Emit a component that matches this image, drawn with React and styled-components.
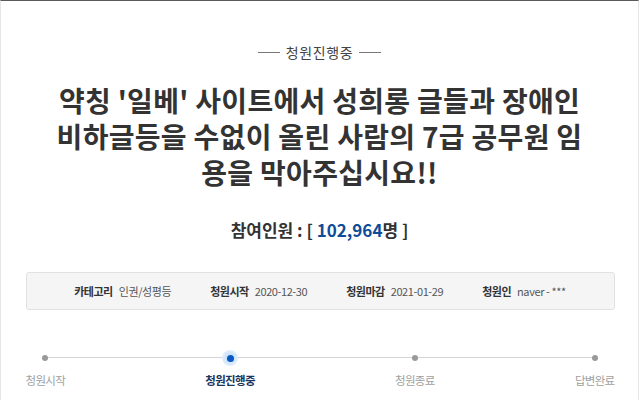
import React from "react";
import styled, { createGlobalStyle } from "styled-components";

const Global = createGlobalStyle`
  html, body { margin: 0; padding: 0; background: #fff; }
  body { font-family: "Noto Sans CJK KR", "Noto Sans", sans-serif; color: #333; }
`;

const Page = styled.div`
  width: 637px;
  height: 399px;
  border-top: 1px solid #5a5a5a;
  border-left: 1px solid #e6e6e6;
  border-right: 1px solid #e6e6e6;
  box-sizing: content-box;
  display: flex;
  flex-direction: column;
  align-items: center;
  overflow: hidden;
`;

const Status = styled.div`
  margin-top: 41px;
  display: flex;
  align-items: center;
  gap: 6px;
  font-size: 14px;
  line-height: 20px;
  letter-spacing: 0.6px;
  color: #444;
  &::before, &::after {
    content: "";
    width: 22px;
    height: 1px;
    background: #777;
  }
`;

const Title = styled.h1`
  margin: 20px 0 0;
  display: flex;
  flex-direction: column;
  align-items: center;
  font-size: 28px;
  font-weight: 700;
  color: #333;
  letter-spacing: 0.3px;
  white-space: nowrap;
`;

const TitleLine = styled.span`
  display: block;
  height: 36px;
  line-height: 36px;
`;

const Count = styled.div`
  margin-top: 28px;
  font-size: 17px;
  font-weight: 700;
  line-height: 24px;
  color: #333;
`;

const Num = styled.span`
  color: #0f4c98;
`;

const InfoBox = styled.div`
  margin-top: 30px;
  width: 587px;
  height: 36px;
  background: #f5f5f5;
  border: 1px solid #e1e1e1;
  border-radius: 3px;
  display: flex;
  align-items: center;
  justify-content: center;
  gap: 39px;
  margin-left: 1px;
`;

const InfoItem = styled.div`
  display: flex;
  align-items: center;
  gap: 6px;
  font-size: 11px;
  line-height: 18px;
`;

const Label = styled.span`
  font-weight: 700;
  color: #333;
  letter-spacing: -0.5px;
`;

const Value = styled.span`
  color: #555;
  letter-spacing: -0.4px;
`;

const Track = styled.div`
  position: relative;
  margin-top: 40px;
  width: 589px;
  display: flex;
  justify-content: space-between;
  margin-left: 1px;
  &::before {
    content: "";
    position: absolute;
    left: 19px;
    right: 20px;
    top: 7px;
    height: 1px;
    background: #d4d4d4;
  }
`;

const Step = styled.div`
  position: relative;
  display: flex;
  flex-direction: column;
  align-items: center;
  gap: 5px;
`;

const DotWrap = styled.div`
  width: 16px;
  height: 16px;
  display: flex;
  align-items: center;
  justify-content: center;
  border-radius: 50%;
  background: ${(p) => (p.$active ? "radial-gradient(circle, #bcd8f7 0%, #dcebfb 60%, rgba(230,241,252,0.4) 100%)" : "transparent")};
`;

const Dot = styled.span`
  width: ${(p) => (p.$active ? 7 : 6)}px;
  height: ${(p) => (p.$active ? 7 : 6)}px;
  border-radius: 50%;
  background: ${(p) => (p.$active ? "#0a58c2" : "#9a9a9a")};
`;

const StepLabel = styled.span`
  font-size: 11.5px;
  line-height: 18px;
  white-space: nowrap;
  letter-spacing: -0.7px;
  color: ${(p) => (p.$active ? "#1c355e" : "#a0a0a0")};
  font-weight: ${(p) => (p.$active ? 700 : 400)};
`;

const steps = ["청원시작", "청원진행중", "청원종료", "답변완료"];
const titleLines = [
  "약칭 '일베' 사이트에서 성희롱 글들과 장애인",
  "비하글등을 수없이 올린 사람의 7급 공무원 임",
  "용을 막아주십시요!!",
];

export default function App() {
  return (
    <>
      <Global />
      <Page>
        <Status>청원진행중</Status>
        <Title>
          {titleLines.map((l) => (
            <TitleLine key={l}>{l}</TitleLine>
          ))}
        </Title>
        <Count>
          참여인원 : [ <Num>102,964</Num>명 ]
        </Count>
        <InfoBox>
          <InfoItem><Label>카테고리</Label><Value>인권/성평등</Value></InfoItem>
          <InfoItem><Label>청원시작</Label><Value>2020-12-30</Value></InfoItem>
          <InfoItem><Label>청원마감</Label><Value>2021-01-29</Value></InfoItem>
          <InfoItem><Label>청원인</Label><Value>naver - ***</Value></InfoItem>
        </InfoBox>
        <Track>
          {steps.map((s, i) => (
            <Step key={s}>
              <DotWrap $active={i === 1}><Dot $active={i === 1} /></DotWrap>
              <StepLabel $active={i === 1}>{s}</StepLabel>
            </Step>
          ))}
        </Track>
      </Page>
    </>
  );
}
